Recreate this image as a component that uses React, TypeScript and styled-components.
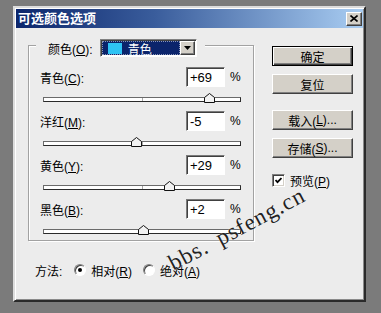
import React from "react";
import styled, { createGlobalStyle } from "styled-components";

const Global = createGlobalStyle`
  html, body { margin: 0; padding: 0; background: #7b7b7b; }
  body {
    width: 381px; height: 313px; overflow: hidden;
    font-family: "Liberation Sans", "Noto Sans CJK SC", sans-serif;
    font-size: 12px; color: #000;
  }
  * { box-sizing: border-box; }
`;

const Window = styled.div`
  position: relative;
  margin: 6px 0 0 13px;
  width: 353px;
  height: 296px;
  background: #ececec;
  border: 2px solid;
  border-color: #dcdcdc #2a2a2a #2a2a2a #dcdcdc;
  box-shadow: inset 1px 1px 0 #fff, inset -1px -1px 0 #8a8a8a;
  padding: 1px;
  display: flex;
  flex-direction: column;
  overflow: hidden;
`;

const TitleBar = styled.div`
  height: 19px;
  flex: none;
  display: flex;
  align-items: center;
  justify-content: space-between;
  padding: 0 1px 0 2px;
  background: linear-gradient(to right, #0c266c 0%, #3a5d9c 40%, #a9cdf2 100%);
`;

const Title = styled.span`
  color: #fff;
  font-family: "Noto Sans CJK SC", sans-serif;
  font-weight: 700;
  font-size: 13px;
  line-height: 13px;
  padding-bottom: 3px;
`;

const CloseBtn = styled.div`
  width: 16px;
  height: 14px;
  background: #d4d0c8;
  border: 1px solid;
  border-color: #fff #404040 #404040 #fff;
  box-shadow: inset -1px -1px 0 #808080;
  display: flex;
  align-items: center;
  justify-content: center;
`;

const Body = styled.div`
  flex: 1;
  display: flex;
  flex-direction: column;
`;

const Main = styled.div`
  display: flex;
  align-items: flex-start;
  padding: 0 10px 0 12px;
  gap: 18px;
`;

const Group = styled.div`
  margin-top: 17px;
  width: 226px;
  border: 1px solid #a2a2a2;
  box-shadow: 1px 1px 0 #fff, inset 1px 1px 0 #fff;
  display: flex;
  flex-direction: column;
`;

const Legend = styled.div`
  align-self: flex-start;
  margin: -7px 0 0 7px;
  height: 18px;
  padding: 0 8px 0 12px;
  background: #ececec;
  display: flex;
  align-items: center;
  gap: 7px;
`;

const Select = styled.div`
  width: 97px;
  height: 18px;
  display: flex;
  align-items: stretch;
  border: 1px solid;
  border-color: #808080 #fff #fff #808080;
  box-shadow: inset 1px 1px 0 #404040;
  padding: 1px;
  background: #fff;
`;

const SelectValue = styled.div`
  flex: 1;
  background: #0b246b;
  display: flex;
  align-items: center;
  gap: 6px;
  padding-left: 6px;
  color: #fff;
  outline: 1px dotted #8a96b8;
  outline-offset: -1px;
  font-family: "Noto Sans CJK SC", sans-serif;
  font-size: 12px;
`;

const Swatch = styled.span<{ $color: string }>`
  width: 14px;
  height: 11px;
  background: ${(p) => p.$color};
`;

const ArrowBtn = styled.div`
  width: 15px;
  background: #d4d0c8;
  border: 1px solid;
  border-color: #fff #404040 #404040 #fff;
  box-shadow: inset -1px -1px 0 #808080;
  display: flex;
  align-items: center;
  justify-content: center;
`;

const Channels = styled.div`
  margin-top: 10px;
  display: flex;
  flex-direction: column;
`;

const ChannelRow = styled.div`
  height: 20px;
  display: flex;
  align-items: center;
  padding: 0 12px 0 11px;
`;

const FieldLabel = styled.span`
  flex: 1;
  white-space: nowrap;
`;

const NumInput = styled.div`
  width: 39px;
  height: 20px;
  background: #fff;
  border: 1px solid;
  border-color: #7a7a7a #fff #fff #7a7a7a;
  box-shadow: inset 1px 1px 0 #404040;
  padding: 0 0 0 3px;
  display: flex;
  align-items: center;
  font-family: "Liberation Sans", sans-serif;
  font-size: 13px;
`;

const Percent = styled.span`
  margin-left: 5px;
  font-family: "Liberation Sans", sans-serif;
  font-size: 12px;
  width: 11px;
`;

const SliderArea = styled.div`
  padding: 10px 12px 9px 14px;
  &:last-child { padding-bottom: 6px; }
`;

const Track = styled.div`
  position: relative;
  height: 5px;
  background: #fff;
  border: 1px solid;
  border-color: #6a6a6a #2a2a2a #2a2a2a #6a6a6a;
`;

const Tick = styled.span`
  position: absolute;
  left: 50%;
  top: 0;
  width: 1px;
  height: 3px;
  background: #a8a8a8;
`;

const Thumb = styled.svg`
  position: absolute;
  top: -5px;
  margin-left: -6px;
  width: 11px;
  height: 10px;
`;

const Side = styled.div`
  width: 81px;
  padding-top: 18px;
  display: flex;
  flex-direction: column;
`;

const Btn = styled.div<{ $default?: boolean; $gap?: number }>`
  height: 20px;
  margin-top: ${(p) => p.$gap ?? 0}px;
  background: #d4d0c8;
  display: flex;
  align-items: center;
  justify-content: center;
  font-family: "Liberation Sans", "Noto Sans CJK SC", sans-serif;
  font-size: 12px;
  border: 1px solid;
  border-color: ${(p) => (p.$default ? "#000" : "#fff #404040 #404040 #fff")};
  box-shadow: ${(p) =>
    p.$default
      ? "inset 1px 1px 0 #fff, inset -1px -1px 0 #404040, inset -2px -2px 0 #808080"
      : "inset -1px -1px 0 #808080"};
`;

const CheckRow = styled.label`
  margin-top: 14px;
  display: flex;
  align-items: center;
  gap: 5px;
`;

const CheckBox = styled.span`
  width: 13px;
  height: 13px;
  background: #fff;
  border: 1px solid;
  border-color: #808080 #fff #fff #808080;
  box-shadow: inset 1px 1px 0 #404040, inset -1px -1px 0 #d4d0c8;
  display: flex;
  align-items: center;
  justify-content: center;
`;

const Footer = styled.div`
  margin-top: 21px;
  height: 16px;
  display: flex;
  align-items: center;
  padding-left: 19px;
`;

const MethodLabel = styled.span`
  margin-right: 12px;
`;

const RadioItem = styled.label<{ $gapAfter?: number }>`
  display: flex;
  align-items: center;
  gap: 5px;
  margin-right: ${(p) => p.$gapAfter ?? 0}px;
`;

const Radio = styled.span<{ $on?: boolean }>`
  width: 12px;
  height: 12px;
  border-radius: 50%;
  background: #fff;
  border: 1px solid;
  border-color: #808080 #fff #fff #808080;
  box-shadow: inset 1px 1px 0 #404040;
  display: flex;
  align-items: center;
  justify-content: center;
  &::after {
    content: "";
    width: 4px;
    height: 4px;
    border-radius: 50%;
    background: ${(p) => (p.$on ? "#000" : "transparent")};
  }
`;

const Watermark = styled.div`
  position: absolute;
  left: 159px;
  top: 244px;
  height: 24px;
  line-height: 24px;
  white-space: nowrap;
  font-family: "Liberation Serif", serif;
  font-size: 23px;
  letter-spacing: 1px;
  word-spacing: 5px;
  color: #222;
  text-shadow: 0 0 1px #fff;
  transform-origin: 0 20px;
  transform: rotate(-28deg);
  pointer-events: none;
`;

type Ch = { name: string; key: string; value: number };
const channels: Ch[] = [
  { name: "青色", key: "C", value: 69 },
  { name: "洋红", key: "M", value: -5 },
  { name: "黄色", key: "Y", value: 29 },
  { name: "黑色", key: "B", value: 2 },
];

const fmt = (v: number) => (v > 0 ? `+${v}` : `${v}`);

export default function App() {
  return (
    <>
      <Global />
      <Window>
        <TitleBar>
          <Title>可选颜色选项</Title>
          <CloseBtn>
            <svg width="8" height="7" viewBox="0 0 8 7">
              <path d="M0.5 0.5 L7.5 6.5 M7.5 0.5 L0.5 6.5" stroke="#000" strokeWidth="1.6" />
            </svg>
          </CloseBtn>
        </TitleBar>
        <Body>
          <Main>
            <Group>
              <Legend>
                <span>
                  颜色(<u>O</u>):
                </span>
                <Select>
                  <SelectValue>
                    <Swatch $color="#2ec3f4" />
                    <span>青色</span>
                  </SelectValue>
                  <ArrowBtn>
                    <svg width="7" height="4" viewBox="0 0 7 4">
                      <path d="M0 0 H7 L3.5 4 Z" fill="#000" />
                    </svg>
                  </ArrowBtn>
                </Select>
              </Legend>
              <Channels>
                {channels.map((c) => (
                  <React.Fragment key={c.key}>
                    <ChannelRow>
                      <FieldLabel>
                        {c.name}(<u>{c.key}</u>):
                      </FieldLabel>
                      <NumInput>{fmt(c.value)}</NumInput>
                      <Percent>%</Percent>
                    </ChannelRow>
                    <SliderArea>
                      <Track>
                        <Tick />
                        <Thumb viewBox="0 0 11 10" style={{ left: `${50 + c.value / 2}%` }}>
                          <path
                            d="M0.5 4.5 L5.5 0.5 L10.5 4.5 L10.5 9.5 L0.5 9.5 Z"
                            fill="#f2f2f2"
                            stroke="#111"
                            strokeWidth="1"
                          />
                        </Thumb>
                      </Track>
                    </SliderArea>
                  </React.Fragment>
                ))}
              </Channels>
            </Group>
            <Side>
              <Btn $default>确定</Btn>
              <Btn $gap={8}>复位</Btn>
              <Btn $gap={16}>
                载入(<u>L</u>)...
              </Btn>
              <Btn $gap={8}>
                存储(<u>S</u>)...
              </Btn>
              <CheckRow>
                <CheckBox>
                  <svg width="7" height="7" viewBox="0 0 7 7">
                    <path d="M0.5 3 L2.5 5.2 L6.5 1" stroke="#000" strokeWidth="1.8" fill="none" />
                  </svg>
                </CheckBox>
                <span>
                  预览(<u>P</u>)
                </span>
              </CheckRow>
            </Side>
          </Main>
          <Footer>
            <MethodLabel>方法:</MethodLabel>
            <RadioItem $gapAfter={11}>
              <Radio $on />
              <span>
                相对(<u>R</u>)
              </span>
            </RadioItem>
            <RadioItem>
              <Radio />
              <span>
                绝对(<u>A</u>)
              </span>
            </RadioItem>
          </Footer>
        </Body>
        <Watermark>bbs. psfeng.cn</Watermark>
      </Window>
    </>
  );
}
